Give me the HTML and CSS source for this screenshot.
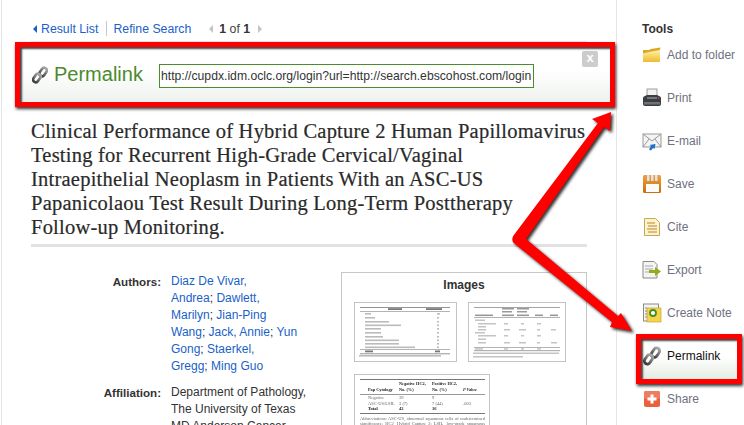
FILE: index.html
```html
<!DOCTYPE html>
<html lang="en">
<head>
<meta charset="utf-8">
<title>Permalink</title>
<link rel="stylesheet" href="styles.css">
</head>
<body>
<svg width="0" height="0" class="defs">
  <defs>
    <linearGradient id="chainG" x1="0" y1="0" x2="0" y2="1"><stop offset="0" stop-color="#a8a8a8"/><stop offset="1" stop-color="#3c3c3c"/></linearGradient>
    <symbol id="chain" viewBox="0 0 16 18">
      <g fill="none" stroke="url(#chainG)" stroke-width="2.600">
        <rect x="8.400" y="1.400" width="5.400" height="9" rx="2.700" transform="rotate(35 11 6)"/>
        <rect x="2.200" y="7.600" width="5.400" height="9" rx="2.700" transform="rotate(35 5 12)"/>
      </g>
    </symbol>
    <linearGradient id="folderG" x1="0" y1="0" x2="0" y2="1"><stop offset="0" stop-color="#fff2a8"/><stop offset="1" stop-color="#eebb2e"/></linearGradient>
    <linearGradient id="saveG" x1="0" y1="0" x2="0" y2="1"><stop offset="0" stop-color="#f0a040"/><stop offset="1" stop-color="#cf6a08"/></linearGradient>
  </defs>
</svg>
<div class="page">
  <main class="main">
    <nav class="crumbs">
      <span class="tri-left"></span>
      <a class="link">Result List</a>
      <span class="sep"></span>
      <a class="link">Refine Search</a>
      <span class="pager">
        <span class="tri-left muted"></span>
        <span class="count"><b>1</b> of <b>1</b></span>
        <span class="tri-right muted"></span>
      </span>
    </nav>
    <section class="panel">
      <svg class="chain-big"><use href="#chain"/></svg>
      <h2 class="panel-title">Permalink</h2>
      <input class="url" type="text" readonly value="http://cupdx.idm.oclc.org/login?url=http://search.ebscohost.com/login.aspx">
      <span class="close">x</span>
    </section>
    <article class="article">
      <h1 class="title">Clinical Performance of Hybrid Capture 2 Human Papillomavirus<br>Testing for Recurrent High-Grade Cervical/Vaginal<br>Intraepithelial Neoplasm in Patients With an ASC-US<br>Papanicolaou Test Result During Long-Term Posttherapy<br>Follow-up Monitoring.</h1>
      <div class="details">
        <dl class="meta">
          <dt>Authors:</dt>
          <dd class="authors"><a class="link">Diaz De Vivar,<br>Andrea</a>; <a class="link">Dawlett,<br>Marilyn</a>; <a class="link">Jian-Ping<br>Wang</a>; <a class="link">Jack, Annie</a>; <a class="link">Yun<br>Gong</a>; <a class="link">Staerkel,<br>Gregg</a>; <a class="link">Ming Guo</a></dd>
          <dt>Affiliation:</dt>
          <dd>Department of Pathology,<br>The University of Texas<br>MD Anderson Cancer</dd>
        </dl>
        <aside class="images">
          <h3 class="images-title">Images</h3>
          <div class="thumbs">
            <div class="thumb t1">
              <svg width="100" height="57" viewBox="0 0 100 57" class="blur">
                <g fill="#666"><rect x="5" y="4" width="90" height=".7"/><rect x="5" y="8" width="90" height=".5"/><rect x="5" y="46.500" width="90" height=".5"/><rect x="5" y="50.500" width="90" height=".7"/></g>
                <g fill="#777"><rect x="33" y="5.200" width="14" height="1.800"/><rect x="71" y="5.200" width="16" height="1.800"/><rect x="10" y="47.500" width="8" height="1.800"/><rect x="80" y="47.500" width="5" height="1.800"/></g>
                <g fill="#bbb"><rect x="10" y="10" width="6" height="1.600"/><rect x="10" y="14" width="10" height="1.600"/><rect x="10" y="18" width="24" height="1.600"/><rect x="10" y="21.500" width="36" height="1.600"/><rect x="10" y="25" width="16" height="1.600"/><rect x="10" y="29" width="16" height="1.600"/><rect x="10" y="33" width="18" height="1.600"/><rect x="10" y="36.500" width="34" height="1.600"/><rect x="10" y="40" width="34" height="1.600"/><rect x="10" y="43.500" width="50" height="1.600"/><rect x="4" y="52" width="82" height="1.600"/>
                <rect x="82" y="10" width="3" height="1.600"/><rect x="82" y="14" width="2" height="1.600"/><rect x="82" y="18" width="2" height="1.600"/><rect x="82" y="21.500" width="2" height="1.600"/><rect x="82" y="25" width="2" height="1.600"/><rect x="82" y="29" width="2" height="1.600"/><rect x="82" y="33" width="2" height="1.600"/><rect x="82" y="36.500" width="2" height="1.600"/><rect x="82" y="40" width="2" height="1.600"/><rect x="82" y="43.500" width="2" height="1.600"/></g>
              </svg>
            </div>
            <div class="thumb t2">
              <svg width="95" height="57" viewBox="0 0 95 57" class="blur">
                <g fill="#666"><rect x="5" y="4" width="86" height=".6"/><rect x="5" y="14" width="86" height=".5"/><rect x="5" y="44" width="86" height=".5"/><rect x="5" y="47.500" width="86" height=".6"/></g>
                <g fill="#999"><rect x="33" y="5" width="12" height="1.500"/><rect x="48" y="5" width="12" height="1.500"/><rect x="33" y="8" width="10" height="1.500"/><rect x="48" y="8" width="10" height="1.500"/><rect x="6" y="11.500" width="18" height="1.600"/><rect x="33" y="11.500" width="12" height="1.600"/><rect x="48" y="11.500" width="12" height="1.600"/><rect x="66" y="11.500" width="8" height="1.600"/><rect x="81" y="11.500" width="8" height="1.600"/></g>
                <g fill="#c4c4c4"><rect x="6" y="16.500" width="10" height="1.500"/><rect x="9" y="20" width="18" height="1.500"/><rect x="9" y="23" width="8" height="1.500"/><rect x="9" y="26" width="8" height="1.500"/><rect x="6" y="29" width="10" height="1.500"/><rect x="9" y="32" width="18" height="1.500"/><rect x="9" y="35.500" width="8" height="1.500"/><rect x="9" y="39" width="8" height="1.500"/><rect x="6" y="45.200" width="8" height="1.500"/><rect x="4" y="49.500" width="86" height="1.500"/><rect x="4" y="53" width="50" height="1.500"/>
                <rect x="35" y="20" width="4" height="1.500"/><rect x="52" y="20" width="3" height="1.500"/><rect x="68" y="20" width="4" height="1.500"/><rect x="35" y="26" width="6" height="1.500"/><rect x="50" y="26" width="7" height="1.500"/><rect x="68" y="26" width="3" height="1.500"/><rect x="35" y="32" width="4" height="1.500"/><rect x="52" y="32" width="3" height="1.500"/><rect x="68" y="32" width="4" height="1.500"/><rect x="35" y="39" width="6" height="1.500"/><rect x="50" y="39" width="7" height="1.500"/><rect x="68" y="39" width="3" height="1.500"/><rect x="82" y="26" width="5" height="1.500"/><rect x="82" y="39" width="6" height="1.500"/><rect x="35" y="45.200" width="4" height="1.500"/><rect x="52" y="45.200" width="3" height="1.500"/><rect x="68" y="45.200" width="4" height="1.500"/></g>
              </svg>
            </div>
            <div class="thumb t3">
              <table class="mini">
                <thead>
                  <tr><th class="mini-first">Pap Cytology</th><th class="mini-neg">Negative HC2,<br>No. (%)</th><th class="mini-pos">Positive HC2,<br>No. (%)</th><th class="mini-p">P Value</th></tr>
                </thead>
                <tbody>
                  <tr><td class="mini-first">Negative</td><td>39</td><td>9</td><td></td></tr>
                  <tr><td class="mini-first">ASC-US/LSIL</td><td>3 (7)</td><td>7 (44)</td><td>.003</td></tr>
                  <tr class="mini-total"><td class="mini-first">Total</td><td>42</td><td>16</td><td></td></tr>
                </tbody>
              </table>
              <p class="mini-note">Abbreviations: ASC-US, abnormal squamous cells of undetermined significance; HC2, Hybrid Capture 2; LSIL, low-grade squamous intraepithelial lesion.</p>
            </div>
          </div>
        </aside>
      </div>
    </article>
  </main>
  <aside class="tools">
    <h3 class="tools-title">Tools</h3>
    <ul class="tool-list">
      <li class="tool">
        <svg class="ico" viewBox="0 0 20 20"><path d="M1 5h6l1.500-1 10-1.500-1 3.500V17H1z" fill="#d9a82a"/><path d="M1 8.500 7 7l11-2v10.500l-1 1.500H1z" fill="url(#folderG)"/></svg>
        Add to folder
      </li>
      <li class="tool">
        <svg class="ico" viewBox="0 0 20 20"><rect x="5" y="1" width="10" height="7" fill="#f2f2f2" stroke="#888" stroke-width=".8"/><path d="M2 8.500 5 7h10l3 1.500c1 .5 1 1.500 1 2.500v5c0 1-1 2-2 2H3c-1 0-2-1-2-2v-5c0-1 0-2 1-2.500z" fill="#3a3d42"/><rect x="5" y="9" width="10" height="2" fill="#777"/><rect x="2" y="14" width="16" height="2.500" fill="#6f7276"/><circle cx="16.500" cy="10" r=".8" fill="#e05050"/></svg>
        Print
      </li>
      <li class="tool">
        <svg class="ico" viewBox="0 0 20 20"><rect x="1" y="3" width="18" height="13" fill="#f4f4f4" stroke="#999"/><path d="m1 3 9 7 9-7M1 16l6-8M19 16l-6-8" fill="none" stroke="#999"/><path d="m7 18.500 2-3.500-1.500-1 6-1-1 5-1.500-1-2 2.500z" fill="#1f6fc4"/></svg>
        E-mail
      </li>
      <li class="tool">
        <svg class="ico" viewBox="0 0 20 20"><rect x="1" y="1" width="18" height="18" rx="1.500" fill="url(#saveG)"/><rect x="5" y="1" width="2.500" height="6" fill="#dfe3ea"/><rect x="9" y="1" width="2.500" height="6" fill="#dfe3ea"/><rect x="13" y="1" width="2.500" height="6" fill="#dfe3ea"/><rect x="4" y="10" width="13" height="8" fill="#fbfbfb"/></svg>
        Save
      </li>
      <li class="tool">
        <svg class="ico" viewBox="0 0 20 20"><path d="M2.500 1.500h11l4 4v13h-15z" fill="#fdf3c8" stroke="#c2a95a"/><path d="M5 6h8M6 9h9M5 12h10M6 15h9" stroke="#cfa96a" stroke-width="1.300"/></svg>
        Cite
      </li>
      <li class="tool">
        <svg class="ico" viewBox="0 0 20 20"><path d="M1 1.500h11l3 3v13.500H1z" fill="#f4f4f4" stroke="#8a8a8a"/><path d="M3 6h8M3 9h8M3 12h8" stroke="#aaa"/><path d="M7 10h6V7l6 4.500-6 4.500v-3H7z" fill="#9aa81c"/></svg>
        Export
      </li>
      <li class="tool">
        <svg class="ico" viewBox="0 0 20 20"><rect x="1.500" y="1" width="15" height="17" fill="#f4f4f4" stroke="#8a8a8a"/><rect x="5" y="5" width="14" height="14" fill="#f6d44a" stroke="#b89a20" stroke-width=".6"/><circle cx="11" cy="10" r="3" fill="#fff" stroke="#4a8c2a" stroke-width="1.800"/><path d="M3 5h2M3 8h2M3 11h2M3 14h2" stroke="#888"/></svg>
        Create Note
      </li>
      <li class="tool tool-active">
        <svg class="ico"><use href="#chain"/></svg>
        Permalink
      </li>
      <li class="tool">
        <svg class="ico" viewBox="0 0 20 20"><rect x="2" y="2" width="16" height="16" rx="2" fill="#e8603c"/><rect x="2" y="2" width="16" height="8" rx="2" fill="#ee7d60"/><path d="M8.500 5.500h3v3h3v3h-3v3h-3v-3h-3v-3h3z" fill="#fff"/></svg>
        Share
      </li>
    </ul>
  </aside>
</div>
<svg class="arrow" width="744" height="425" viewBox="0 0 744 425">
  <path d="M611 112 592 119 598 123 513.500 235.500C511.500 238.500 512 242 515 244L612 322 610 327 632 331 621 313 618 316 526 239 604 127 610 131z" fill="#f00"/>
</svg>
</body>
</html>
```
FILE: styles.css
```css
html, body {
  margin: 0;
  height: 425px;
  overflow: hidden;
  background: #fff;
  font-family: "Liberation Sans", Arial, sans-serif;
  font-size: 12px;
  color: #333;
}
.defs { position: absolute; }
.page {
  display: flex;
  height: 425px;
  margin-left: 1px;
  border-left: 1px solid #e6e6e6;
}
.main {
  width: 614px;
  border-right: 1px solid #e6e6e6;
  flex: none;
}
.link { color: #1a5fc8; }
.crumbs {
  display: flex;
  align-items: center;
  height: 42px;
  margin-left: 29px;
  margin-right: 29px;
  padding: 16px 0 0 2px;
  box-sizing: border-box;
  border-bottom: 1px solid #ededed;
  font-size: 12.300px;
}
.tri-left, .tri-right {
  width: 0;
  height: 0;
  border-top: 4px solid transparent;
  border-bottom: 4px solid transparent;
}
.tri-left { border-right: 4px solid #1a5fc8; margin-right: 4px; }
.tri-right { border-left: 4px solid #1a5fc8; }
.tri-left.muted { border-right-color: #c4c4c4; margin-right: 6px; }
.tri-right.muted { border-left-color: #c4c4c4; margin-left: 8px; }
.sep {
  width: 1px;
  height: 15px;
  background: #c8c8c8;
  margin: 0 6px 0 8px;
}
.pager { display: flex; align-items: center; margin-left: 18px; color: #444; }
.count b { color: #333; }
.panel {
  position: relative;
  display: flex;
  align-items: center;
  height: 55px;
  margin-left: 13px;
  margin-right: 1px;
  padding-left: 11px;
  border: 5px solid #f00;
  background: linear-gradient(#fff 40%, #eef2ee);
  box-shadow: 1px 2px 3px #333, inset 2px 2px 2px #444;
  box-sizing: content-box;
}
.chain-big { width: 16px; height: 18px; flex: none; margin-left: 1px; }
.panel-title {
  margin: 0 0 0 6px;
  width: 105px;
  font-size: 20px;
  font-weight: normal;
  color: #4b8a2e;
}
.url {
  width: 371px;
  height: 22px;
  padding: 0 1px;
  margin: 2px 0 0;
  border: 1px solid #4c8c2c;
  font: 12.200px "Liberation Sans", Arial, sans-serif;
  color: #333;
  background: #fff;
  outline: none;
}
.close {
  position: absolute;
  top: 4px;
  right: 12px;
  width: 16px;
  height: 16px;
  border-radius: 2px;
  background: #ccc;
  color: #fff;
  font-weight: bold;
  font-size: 13px;
  line-height: 14px;
  text-align: center;
}
.article { margin: 0 29px; }
.title {
  margin: 12px 0 0;
  padding-bottom: 5px;
  border-bottom: 3px solid #e2e2e2;
  font-family: "Liberation Serif", Georgia, serif;
  font-size: 20.500px;
  letter-spacing: .23px;
  font-weight: normal;
  line-height: 24px;
  color: #2a2a2a;
  white-space: nowrap;
  -webkit-text-stroke: .2px #2a2a2a;
}
.details {
  display: flex;
  justify-content: space-between;
  margin-top: 25px;
}
.meta {
  display: grid;
  grid-template-columns: 130px 140px;
  column-gap: 10px;
  align-content: start;
  margin: 0;
  padding-top: 1px;
  line-height: 17px;
}
.meta dt { font-weight: bold; font-size: 11.600px; text-align: right; }
.meta dd { margin: 0 0 9px; white-space: nowrap; }
.authors { color: #333; }
.images {
  width: 244px;
  height: 200px;
  border: 1px solid #c8c8c8;
  flex: none;
}
.images-title {
  margin: 5px 0 0;
  text-align: center;
  font-size: 12px;
  line-height: 15px;
  color: #333;
}
.thumbs {
  display: grid;
  grid-template-columns: 103px 98px;
  column-gap: 11px;
  row-gap: 12px;
  margin: 9px 0 0 12px;
  align-items: start;
}
.thumb {
  border: 1px solid #c4c4c4;
  box-sizing: border-box;
  background: #fff;
}
.t1, .t2 { height: 60px; overflow: hidden; }
.blur { display: block; filter: blur(.4px); }
.t3 { width: 136px; padding: 4px 5px; grid-column: 1 / 3; filter: blur(.25px); }
.mini {
  width: 125px;
  table-layout: fixed;
  border-collapse: collapse;
  border-top: 1px solid #777;
  border-bottom: 1px solid #777;
  font-family: "Liberation Serif", serif;
  font-size: 4.500px;
  line-height: 5.500px;
  color: #444;
}
.mini th { padding: 1px 0 2px; font-size: 4.300px; text-align: left; border-bottom: 1px solid #999; vertical-align: bottom; color: #222; }
.mini td { padding: 0; color: #666; }
.mini th.mini-first, .mini td.mini-first { padding-left: 8px; }
.mini th.mini-first { width: 31px; }
.mini th.mini-neg { width: 33px; }
.mini th.mini-pos { width: 31px; }
.mini th.mini-p { width: 22px; font-style: italic; }
.mini-total td { font-weight: bold; padding-bottom: 1px; }
.mini tr.mini-total td { color: #222; }
.mini-note {
  margin: 2px 0 0;
  width: 125px;
  font-family: "Liberation Serif", serif;
  font-size: 4.500px;
  line-height: 5.500px;
  color: #666;
  text-align: justify;
}
.tools {
  flex: 1;
  padding: 22px 0 0 25px;
}
.tools-title {
  margin: 0;
  font-size: 12px;
  line-height: 14px;
  color: #333;
}
.tool-list {
  list-style: none;
  margin: -1px 0 0;
  padding: 0;
}
.tool {
  display: flex;
  align-items: center;
  gap: 5px;
  height: 43px;
  color: #6f7180;
  position: relative;
  padding-bottom: 3px;
  box-sizing: border-box;
}
.ico { width: 20px; height: 20px; flex: none; }
.tool-active { color: #111; z-index: 0; }
.tool-active::before {
  content: "";
  position: absolute;
  z-index: -1;
  left: -6px;
  top: -2px;
  width: 106px;
  height: 50px;
  box-sizing: border-box;
  border: 5px solid #f00;
  background: linear-gradient(#fff 45%, #e4ece2);
  box-shadow: 1px 2px 3px #333, inset 2px 2px 2px #444;
}
.arrow {
  position: absolute;
  left: 0;
  top: 0;
  pointer-events: none;
  filter: drop-shadow(2px 2px 1.500px #333);
}
```
